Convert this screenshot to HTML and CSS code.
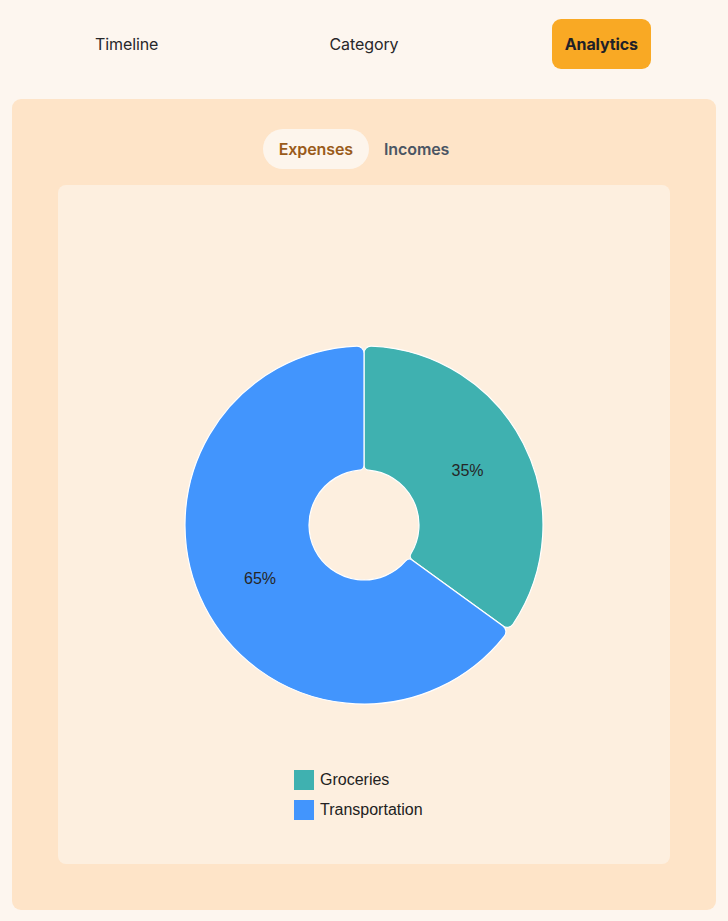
FILE: index.html
```html
<!DOCTYPE html>
<html>
<head>
<meta charset="utf-8">
<link rel="stylesheet" href="styles.css">
</head>
<body>
<nav class="nav">
  <div class="nav-cell"><button class="nav-btn">Timeline</button></div>
  <div class="nav-cell"><button class="nav-btn">Category</button></div>
  <div class="nav-cell"><button class="nav-btn active">Analytics</button></div>
</nav>
<main class="card">
  <div class="toggle">
    <button class="pill selected">Expenses</button>
    <button class="pill">Incomes</button>
  </div>
  <section class="chart-box">
    <svg class="donut" width="612" height="569" viewBox="58 185 612 569">
      <path class="seg teal" d="M364 353.14 A7 7 0 0 1 371.28 346.15 A179 179 0 0 1 512.96 624.25 A7 7 0 0 1 503.04 626.02 L412.37 560.14 A5 5 0 0 1 411.03 553.50 A55 55 0 0 0 368.58 470.19 A5 5 0 0 1 364 465.21 Z"/>
      <path class="seg blue" d="M503.04 626.02 A7 7 0 0 1 504.41 636.01 A179 179 0 1 1 356.72 346.15 A7 7 0 0 1 364 353.14 L364 465.21 A5 5 0 0 1 359.42 470.19 A55 55 0 1 0 405.64 560.94 A5 5 0 0 1 412.37 560.14 Z"/>
      <text class="lbl" x="467.5" y="476">35%</text>
      <text class="lbl" x="260" y="584">65%</text>
    </svg>
    <ul class="legend">
      <li class="legend-item"><span class="swatch teal-bg"></span>Groceries</li>
      <li class="legend-item"><span class="swatch blue-bg"></span>Transportation</li>
    </ul>
  </section>
</main>
</body>
</html>
```
FILE: styles.css
```css
* { box-sizing: border-box; }
html, body { margin: 0; padding: 0; }
body {
  background: #fdf6ef;
  font-family: Inter, "Noto Sans", sans-serif;
  width: 728px;
  height: 921px;
  overflow: hidden;
}
.nav {
  display: grid;
  grid-template-columns: 1fr 1fr 1fr;
  padding: 19px 8px 0;
  height: 99px;
}
.nav-cell {
  display: flex;
  justify-content: center;
  align-items: flex-start;
}
.nav-btn {
  font-family: Inter, sans-serif;
  font-size: 16px;
  line-height: 24px;
  height: 50px;
  padding: 13px 13px;
  border: none;
  border-radius: 9px;
  background: transparent;
  color: #27272a;
  font-weight: 400;
  letter-spacing: -0.1px;
}
.nav-btn.active {
  background: #f9a924;
  font-weight: 700;
  color: #1f2128;
}
.card {
  margin: 0 12px;
  height: 811px;
  background: #fee4c8;
  border-radius: 9px;
  padding: 30px 46px 46px;
  display: flex;
  flex-direction: column;
  align-items: center;
}
.toggle {
  display: flex;
  height: 40px;
}
.pill {
  font-family: Inter, sans-serif;
  font-size: 16px;
  font-weight: 600;
  height: 40px;
  padding: 0 15.5px;
  border: none;
  border-radius: 20px;
  background: transparent;
  color: #4b5563;
  letter-spacing: -0.1px;
}
.pill.selected {
  background: #fdf5ec;
  color: #9a5b1a;
}
.chart-box {
  margin-top: 16px;
  width: 612px;
  flex: 1;
  background: #fdefdf;
  border-radius: 8px;
  display: flex;
  flex-direction: column;
}
.donut { display: block; }
.seg { stroke: #ffffff; stroke-width: 1.2; }
.teal { fill: #3fb1b0; }
.blue { fill: #4295fd; }
.lbl {
  font-family: "Liberation Sans", Arial, sans-serif;
  font-size: 16px;
  fill: #262626;
  text-anchor: middle;
}
.legend {
  list-style: none;
  margin: 16px 0 0 236px;
  padding: 0;
  display: flex;
  flex-direction: column;
  gap: 10px;
}
.legend-item {
  display: flex;
  align-items: center;
  gap: 6px;
  height: 20px;
  font-family: "Liberation Sans", Arial, sans-serif;
  font-size: 16px;
  color: #222;
}
.swatch {
  width: 20px;
  height: 20px;
  display: inline-block;
}
.teal-bg { background: #3fb1b0; }
.blue-bg { background: #4295fd; }
```
